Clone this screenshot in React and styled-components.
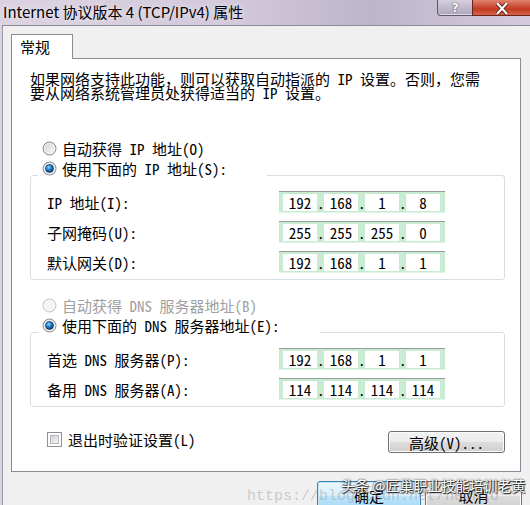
import React from 'react';
import styled, { createGlobalStyle } from 'styled-components';

const DIALOG_FONT = `"Noto Sans Mono CJK SC", "Noto Sans CJK SC", "DejaVu Sans Mono", monospace`;
const UI_FONT = `"Noto Sans CJK SC", "Noto Sans", sans-serif`;

const GlobalStyle = createGlobalStyle`
  html, body {
    margin: 0;
    padding: 0;
    background: #f0f0f0;
  }
  body {
    font-family: ${DIALOG_FONT};
  }
`;

const Window = styled.div`
  position: relative;
  width: 530px;
  height: 505px;
  overflow: hidden;
  display: flex;
  flex-direction: column;
  background: linear-gradient(90deg, #dcd3e2 0%, #d2c8da 45%, #bdb5cb 70%, #d4cadb 100%);
`;

const TitleBar = styled.div`
  display: flex;
  align-items: flex-start;
  height: 25px;
  flex-shrink: 0;
`;

const TitleText = styled.div`
  font-family: ${UI_FONT};
  font-size: 15px;
  line-height: 24px;
  padding-left: 3px;
  color: #000;
  white-space: nowrap;
  text-shadow: 0 0 6px rgba(255, 255, 255, 0.8);
`;

const Controls = styled.div`
  display: flex;
  margin-left: auto;
`;

const HelpButton = styled.div`
  width: 35px;
  height: 16px;
  box-sizing: border-box;
  border: 1px solid #5f5869;
  border-top: none;
  border-right: none;
  border-radius: 0 0 0 4px;
  background: linear-gradient(#d6cfde, #aea5bb);
  box-shadow: inset 0 -1px 0 rgba(255, 255, 255, 0.6);
  display: flex;
  justify-content: center;
  align-items: center;
  color: #fff;
  font-family: "DejaVu Sans", sans-serif;
  font-weight: bold;
  font-size: 13px;
  line-height: 14px;
  text-shadow: 0 0 1px #333, 0 0 1px #333;
`;

const CloseButton = styled.div`
  width: 58px;
  height: 16px;
  box-sizing: border-box;
  border: 1px solid #6a2418;
  border-top: none;
  border-right: none;
  background: linear-gradient(#e0846f, #cc4a33 45%, #c23a22 60%, #d5624a);
  display: flex;
  justify-content: center;
  align-items: flex-end;
`;

const Body = styled.div`
  flex: 1;
  display: flex;
  flex-direction: column;
  margin-left: 2px;
  border-top: 1px solid #8f8a96;
  border-left: 1px solid #9d98a4;
  background: #f0f0f0;
  padding: 8px 9px 0 8px;
`;

const TabStrip = styled.div`
  display: flex;
`;

const Tab = styled.div`
  position: relative;
  z-index: 1;
  width: 62px;
  height: 25px;
  box-sizing: border-box;
  margin-bottom: -1px;
  border: 1px solid #898c95;
  border-bottom: none;
  background: #fff;
  padding-left: 8px;
  font-family: ${UI_FONT};
  font-size: 15px;
  line-height: 24px;
  color: #000;
`;

const Panel = styled.div`
  height: 414px;
  box-sizing: border-box;
  border: 1px solid #898c95;
  background: #fff;
  display: flex;
  flex-direction: column;
  padding: 13px 15px 0 18px;
  font-size: 15px;
  color: #000;
`;

const Description = styled.p`
  margin: 0;
  font-size: 15px;
  line-height: 14px;
  white-space: nowrap;
`;

const OptionRow = styled.div`
  display: flex;
  align-items: center;
  gap: 5px;
  height: 20px;
  margin-top: ${(p) => p.$top}px;
  padding-left: 12px;
  white-space: nowrap;
  color: ${(p) => (p.$disabled ? '#a0a0a0' : '#000')};
`;

const Group = styled.div`
  margin-top: 17px;
  border: 1px solid #d5dfe5;
  border-radius: 3px;
  display: flex;
  flex-direction: column;
  padding-bottom: 2px;
`;

const Legend = styled.div`
  align-self: flex-start;
  display: flex;
  align-items: center;
  gap: 5px;
  height: 20px;
  margin: -18px 0 0 7px;
  padding: 0 40px 0 4px;
  background: #fff;
  white-space: nowrap;
`;

const Fields = styled.div`
  margin-top: 9px;
  display: flex;
  flex-direction: column;
`;

const FieldRow = styled.div`
  display: grid;
  grid-template-columns: 232px auto;
  align-items: center;
  height: 30px;
  padding-left: 16px;
  white-space: nowrap;
`;

const IpBox = styled.div`
  display: flex;
  align-items: center;
  width: 166px;
  height: 22px;
  box-sizing: border-box;
  padding: 0 5px 0 4px;
  background: #c8ecd2;
  border-top: 1px solid #9a9a9a;
  border-bottom: 1px solid #e2f4e7;
`;

const Octet = styled.span`
  width: 34px;
  height: 17px;
  background: #fff;
  text-align: center;
  line-height: 17px;
`;

const Dot = styled.span`
  width: 7px;
  text-align: center;
  line-height: 17px;
`;

const BottomRow = styled.div`
  display: flex;
  align-items: flex-start;
  justify-content: space-between;
  margin-top: 24px;
  padding-left: 17px;
`;

const CheckLabel = styled.label`
  display: flex;
  align-items: center;
  gap: 6px;
  height: 16px;
  white-space: nowrap;
`;

const CheckBox = styled.span`
  width: 15px;
  height: 15px;
  box-sizing: border-box;
  border: 1px solid #8e8f8f;
  background: #fff;
  padding: 2px;
  &::after {
    content: '';
    display: block;
    width: 100%;
    height: 100%;
    box-sizing: border-box;
    border: 1px solid #b4b8be;
    background: linear-gradient(135deg, #cfd3d8, #f7f7f7);
  }
`;

const Button = styled.button`
  width: ${(p) => p.$width}px;
  height: ${(p) => p.$height}px;
  box-sizing: border-box;
  padding: 0;
  border: 1px solid ${(p) => (p.$default ? '#3c7fb1' : '#707070')};
  border-radius: 3px;
  background: ${(p) =>
    p.$default
      ? 'linear-gradient(#eaf6fd 0%, #d9f0fc 50%, #bee6fd 51%, #a7d9f5 100%)'
      : 'linear-gradient(#f2f2f2 0%, #ebebeb 50%, #dddddd 51%, #cfcfcf 100%)'};
  box-shadow: inset 0 0 0 1px ${(p) => (p.$default ? '#c4e6f8' : '#fcfcfc')};
  font-family: ${DIALOG_FONT};
  font-size: 15px;
  color: #000;
  white-space: nowrap;
`;

const Footer = styled.div`
  display: flex;
  justify-content: flex-end;
  gap: 4px;
  padding-top: 9px;
  margin-right: -1px;
`;

const Watermark = styled.div`
  position: absolute;
  left: 341px;
  top: 476px;
  font-family: ${UI_FONT};
  font-size: 14px;
  line-height: 18px;
  color: #fff;
  white-space: nowrap;
  text-shadow: 0 0 2px #000, 1px 1px 1px #222;
`;

const UrlMark = styled.div`
  position: absolute;
  left: 247px;
  top: 488px;
  font-family: "Liberation Mono", monospace;
  font-size: 15px;
  line-height: 18px;
  color: rgba(150, 150, 150, 0.45);
  white-space: nowrap;
`;

const Radio = ({ checked, disabled }) => (
  <svg width="15" height="15" viewBox="0 0 15 15" style={{ flexShrink: 0 }}>
    <defs>
      <linearGradient id="rbFill" x1="0" y1="0" x2="1" y2="1">
        <stop offset="0" stopColor="#cfd1d4" />
        <stop offset="1" stopColor="#fcfcfc" />
      </linearGradient>
      <radialGradient id="rbDot" cx="0.4" cy="0.35" r="0.7">
        <stop offset="0" stopColor="#8fdcff" />
        <stop offset="0.45" stopColor="#1f7fd0" />
        <stop offset="1" stopColor="#0a3564" />
      </radialGradient>
    </defs>
    <circle
      cx="7.5"
      cy="7.5"
      r="6.5"
      fill={disabled ? '#f4f4f4' : 'url(#rbFill)'}
      stroke={disabled ? '#c4c4c4' : '#8a8c8f'}
    />
    <circle cx="7.5" cy="7.5" r="5.2" fill="none" stroke={disabled ? '#f8f8f8' : '#f0f0f0'} strokeWidth="0.8" />
    {checked && <circle cx="7.5" cy="7.5" r="4" fill="url(#rbDot)" stroke="#08305a" strokeWidth="0.6" />}
  </svg>
);

const Ip = ({ parts }) => (
  <IpBox>
    {parts.map((part, i) => (
      <React.Fragment key={i}>
        {i > 0 && <Dot>.</Dot>}
        <Octet>{part}</Octet>
      </React.Fragment>
    ))}
  </IpBox>
);

const ipRows = [
  { label: 'IP 地址(I):', parts: ['192', '168', '1', '8'] },
  { label: '子网掩码(U):', parts: ['255', '255', '255', '0'] },
  { label: '默认网关(D):', parts: ['192', '168', '1', '1'] },
];

const dnsRows = [
  { label: '首选 DNS 服务器(P):', parts: ['192', '168', '1', '1'] },
  { label: '备用 DNS 服务器(A):', parts: ['114', '114', '114', '114'] },
];

const App = () => (
  <>
    <GlobalStyle />
    <Window>
      <TitleBar>
        <TitleText>Internet 协议版本 4 (TCP/IPv4) 属性</TitleText>
        <Controls>
          <HelpButton>?</HelpButton>
          <CloseButton>
            <svg width="16" height="12" viewBox="0 0 16 12">
              <path d="M3 0 L13 11 M13 0 L3 11" stroke="#5a1a10" strokeWidth="4" />
              <path d="M3 0 L13 11 M13 0 L3 11" stroke="#fff" strokeWidth="2.2" />
            </svg>
          </CloseButton>
        </Controls>
      </TitleBar>
      <Body>
        <TabStrip>
          <Tab>常规</Tab>
        </TabStrip>
        <Panel>
          <Description>
            如果网络支持此功能，则可以获取自动指派的 IP 设置。否则，您需
            <br />
            要从网络系统管理员处获得适当的 IP 设置。
          </Description>

          <OptionRow $top={38}>
            <Radio />
            自动获得 IP 地址(O)
          </OptionRow>
          <Group>
            <Legend>
              <Radio checked />
              使用下面的 IP 地址(S):
            </Legend>
            <Fields>
              {ipRows.map((row) => (
                <FieldRow key={row.label}>
                  <span>{row.label}</span>
                  <Ip parts={row.parts} />
                </FieldRow>
              ))}
            </Fields>
          </Group>

          <OptionRow $top={15} $disabled>
            <Radio disabled />
            自动获得 DNS 服务器地址(B)
          </OptionRow>
          <Group>
            <Legend>
              <Radio checked />
              使用下面的 DNS 服务器地址(E):
            </Legend>
            <Fields>
              {dnsRows.map((row) => (
                <FieldRow key={row.label}>
                  <span>{row.label}</span>
                  <Ip parts={row.parts} />
                </FieldRow>
              ))}
            </Fields>
          </Group>

          <BottomRow>
            <CheckLabel>
              <CheckBox />
              退出时验证设置(L)
            </CheckLabel>
            <Button $width={117} $height={22}>高级(V)...</Button>
          </BottomRow>
        </Panel>
        <Footer>
          <Button $default $width={104} $height={29}>确定</Button>
          <Button $width={97} $height={29}>取消</Button>
        </Footer>
      </Body>
      <UrlMark>https://blog.csdn.net/hehhlo</UrlMark>
      <Watermark>头条 @匠巢职业技能培训老黄</Watermark>
    </Window>
  </>
);

export default App;
